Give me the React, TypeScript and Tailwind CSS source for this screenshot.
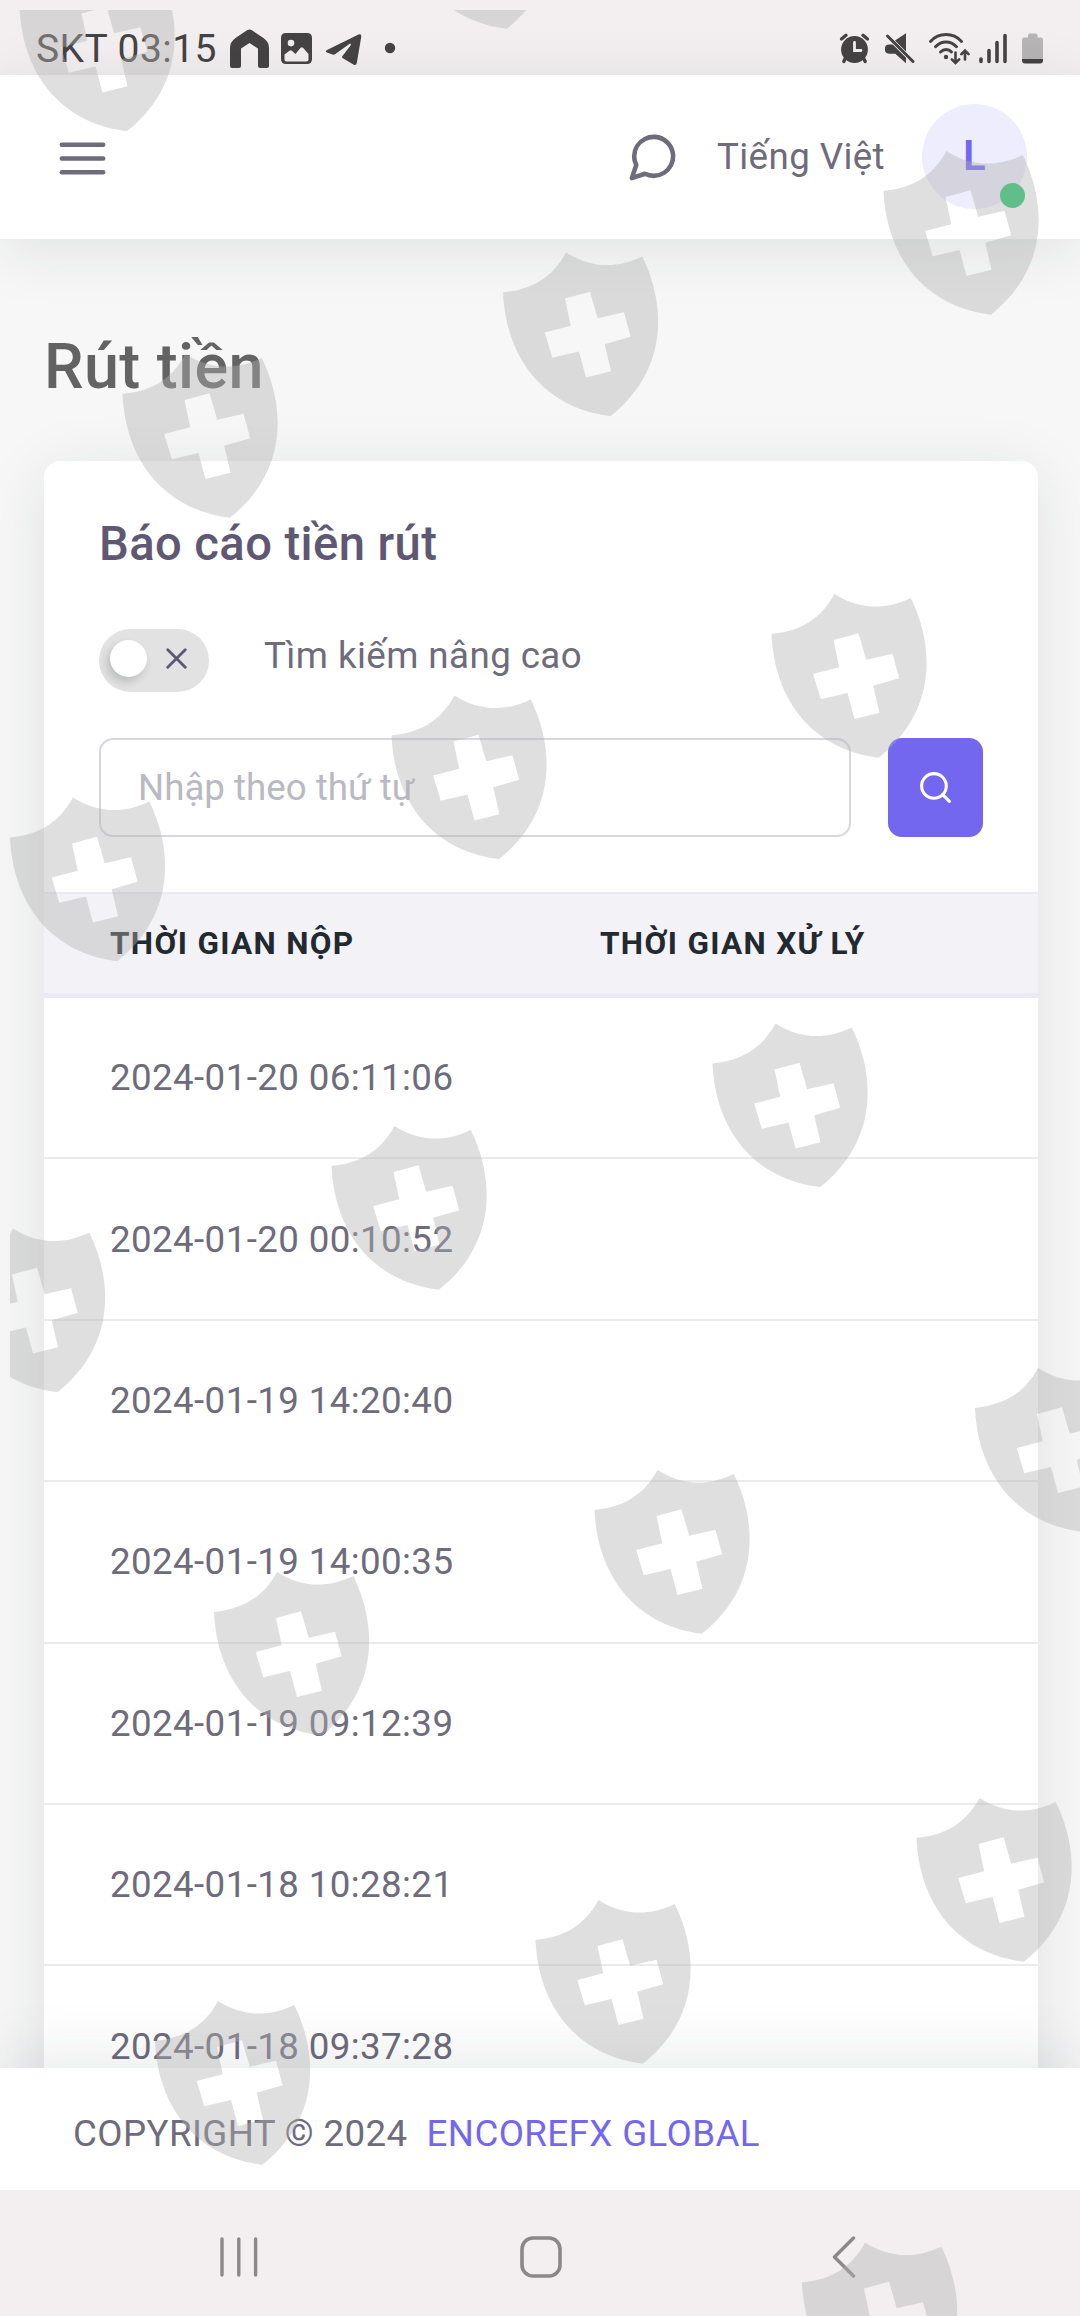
import React from 'react';
import { FiMenu, FiMessageCircle, FiSearch, FiX } from 'react-icons/fi';

const withdrawals = [
  '2024-01-20 06:11:06',
  '2024-01-20 00:10:52',
  '2024-01-19 14:20:40',
  '2024-01-19 14:00:35',
  '2024-01-19 09:12:39',
  '2024-01-18 10:28:21',
  '2024-01-18 09:37:28',
];

// top-left corner of every shield in the overlay
const shields = [
  [19.5, -32.5],
  [399.5, -135],
  [883.5, 151],
  [503, 252.5],
  [122.5, 354],
  [771.5, 594],
  [391.5, 695.5],
  [10, 797.5],
  [712.5, 1023.5],
  [331.5, 1126],
  [-50, 1228.5],
  [975, 1368],
  [594.5, 1470],
  [214, 1572],
  [916.5, 1798],
  [535.5, 1900],
  [155, 2001],
  [802, 2242.5],
];

const ShieldOverlay: React.FC = () => (
  <svg className="absolute inset-0 z-50 pointer-events-none" width="1080" height="2316" viewBox="0 0 1080 2316">
    <defs>
      <clipPath id="overlay-area">
        <rect x="10" y="10" width="1070" height="2306" />
      </clipPath>
      <path
        id="shield"
        fillRule="evenodd"
        d="M0 40C28 37 49 26 63 0C87 15 112 17 139.3 4C166.500 60 160.500 122 107.3 163.7C43 156 3 108 0 40ZM62 46L67.7 73.3L41.7 80L49.3 105.3L76 99L83 125L108 118.7L101.7 91.7L127.7 84.3L121 59.7L94.7 65.7L87 39.3Z"
      />
    </defs>
    <g clipPath="url(#overlay-area)" fill="#b1b1b1" fillOpacity="0.41">
      {shields.map(([x, y]) => (
        <use key={`${x}-${y}`} href="#shield" x={x} y={y} />
      ))}
    </g>
  </svg>
);

const StatusBar: React.FC = () => (
  <div className="h-[75px] shrink-0 bg-[#f3eff0] flex items-start justify-between pl-[36px] pr-[37px] text-[#464344]">
    <div className="flex items-start">
      <span className="w-[194px] mt-[26px] text-[39px] leading-[46px] whitespace-nowrap tracking-[0.450px]">SKT 03:15</span>
      {/* Notifications */}
      <svg className="mt-[20px]" width="170" height="50" viewBox="230 20 170 50" fill="currentColor">
        <path d="M247 30.3Q249.500 28.500 252 30.300L263.500 38Q269 42 269 48V66Q269 68 267 68H260Q258 68 258 66V48.500L249.500 43L241 48.500V66Q241 68 239 68H232Q230 68 230 66V48Q230 42 235.500 38Z" />
        <path fillRule="evenodd" d="M286 33H307Q312 33 312 38V59Q312 64 307 64H286Q281 64 281 59V38Q281 33 286 33ZM284.500 54.500V59.500Q284.500 61.500 286.500 61.500H306.500Q308.500 61.500 308.500 59.500V54L303 47.800Q301.800 46.500 300.600 47.800L295.500 54L291.500 50.600Q290.500 49.800 289.500 50.800ZM291 39.800A3.300 3.300 0 1 0 291 46.400A3.300 3.300 0 1 0 291 39.800Z" />
        <path d="M327 50L358.500 34.600Q361.500 33.500 361.300 36.500L356.800 63Q356 66 353.400 64.500L342.500 58Q341.500 57.200 342.300 56.200L350.500 45.500C351.500 43.800 350.500 43.200 349 44.200L335 54.300Q334 55 332.500 54.500L327 52.500Q324.700 51.300 327 50Z" />
        <circle cx="390" cy="48" r="5.200" />
      </svg>
    </div>
    <svg className="mt-[20px]" width="207" height="50" viewBox="836 20 207 50" fill="currentColor">
      {/* Alarm */}
      <circle cx="854.500" cy="49.500" r="13.400" />
      <g stroke="currentColor" strokeWidth="3.400" strokeLinecap="round" fill="none">
        <path d="M841.500 39L846 35.300M863 35.300L867.500 39M845.500 58L843.800 61.500M863.500 58L865.200 61.500" />
      </g>
      <path d="M854.500 42.500V50.500H861" stroke="#f3eff0" strokeWidth="2.800" fill="none" strokeLinecap="round" />
      {/* Muted speaker */}
      <path d="M895 40.500L906 33.200V51.500ZM906 58V63.300L895.500 53.800H890Q885 53.800 885 50V48Q885 44.500 889 44.500H892.500Z" />
      <path d="M892.500 44.500L906 58L904 61L895.500 53.800Z" />
      <path d="M887.500 36L913 61.500" stroke="currentColor" strokeWidth="3" strokeLinecap="round" />
      {/* Wifi */}
      <g stroke="currentColor" strokeWidth="3" strokeLinecap="round" fill="none">
        <path d="M930.500 41.500C939 32.300 953 32.300 961.500 41.500M935.500 46.700C941.500 40.300 950.500 40.300 956.500 46.700M940.500 52C944 48.600 948.500 48.600 951.500 52" />
        <path strokeWidth="2.600" d="M955.500 52.500V62.500M951.800 59.300L955.500 63L959.200 59.300M965 59.500V51M961.300 54.200L965 50.600L968.600 54.200" />
      </g>
      <circle cx="946" cy="57" r="2.200" />
      {/* Signal */}
      <path d="M981 59V61.500M989 50.500V61.500M997 42.500V61.500M1005 35.500V61.500" stroke="currentColor" strokeWidth="3.600" strokeLinecap="round" />
      {/* Battery */}
      <path fill="#b7b4b5" d="M1028 37.500V35.500Q1028 33.500 1030 33.500H1035.500Q1037.500 33.500 1037.500 35.500V37.500H1040.500Q1043 37.500 1043 40V59H1022V40Q1022 37.500 1024.500 37.500Z" />
      <path d="M1022 59H1043V60.500Q1043 63.500 1040 63.500H1025Q1022 63.500 1022 60.500Z" />
    </svg>
  </div>
);

const Navbar: React.FC = () => (
  <header className="relative z-10 h-[164px] shrink-0 bg-white flex items-center justify-between pl-[55px] pr-[53px] shadow-[0_10px_63px_rgba(34,41,47,0.1)]">
    <FiMenu className="w-[55px] h-[55px] mt-[3px]" />
    <div className="flex items-center pb-[2px]">
      <FiMessageCircle className="w-[55px] h-[55px] mt-[2px]" />
      <span className="ml-[37px] w-[167px] whitespace-nowrap">Tiếng Việt</span>
      <div className="relative ml-[38px] w-[105px] h-[105px] pb-[2px] rounded-full bg-[#eeedfd] text-[#7367f0] flex items-center justify-center text-[42px] font-semibold">
        L
        <span className="absolute right-[2px] bottom-[1px] w-[25px] h-[25px] rounded-full bg-[#28c76f]" />
      </div>
    </div>
  </header>
);

const SearchPanel: React.FC = () => (
  <div className="h-[431px] px-[55px] pt-[55px]">
    <h4 className="text-[47.200px] leading-[56px] font-medium text-[#5e5873]">Báo cáo tiền rút</h4>
    <div className="mt-[57px] flex items-start">
      <div className="w-[110px] h-[63px] rounded-full bg-[#e2e2e2] flex items-center justify-between pl-[11px] pr-[15px]">
        <div className="w-[37px] h-[37px] -mt-[4px] rounded-full bg-white shadow-[-3px_5px_8px_rgba(34,41,47,0.2)]" />
        <FiX className="w-[35px] h-[35px] -mt-[4px] text-[#5e5873]" />
      </div>
      <span className="ml-[55px] mt-[5px] leading-[44px] tracking-[0.430px]">Tìm kiếm nâng cao</span>
    </div>
    <div className="mt-[46px] flex justify-between">
      <div className="w-[752px] h-[99px] border-[2px] border-[#d8d6de] rounded-[14px] px-[37px] flex items-center text-[#b9b9c3] tracking-normal">
        Nhập theo thứ tự
      </div>
      <button className="w-[95px] h-[99px] rounded-[14px] bg-[#7367f0] text-white flex items-center justify-center">
        <FiSearch className="w-[37px] h-[37px]" />
      </button>
    </div>
  </div>
);

const App: React.FC = () => {
  return (
    <div className="relative w-[1080px] h-[2316px] overflow-hidden flex flex-col bg-[#f7f7f7] text-[#6e6b7b] font-[Roboto,sans-serif] text-[36.700px] leading-[53px] tracking-[0.400px]">
      <StatusBar />
      <Navbar />

      <main className="flex-1 min-h-0 overflow-hidden px-[44px] pt-[90px]">
        <h2 className="text-[62.900px] leading-[75px] font-medium text-[#636363]">Rút tiền</h2>
        <section className="mt-[57px] mr-[-2px] h-[1800px] rounded-[16px] bg-white shadow-[0_10px_63px_rgba(34,41,47,0.1)]">
          <SearchPanel />
          <div className="h-[106px] flex items-center bg-[#f3f2f7] border-t-[2px] border-t-[#ebe9f1] border-b-[5px] border-b-[#ebe9f6] pl-[66px] text-[31.500px] font-bold tracking-[1.310px] text-[#22292f]">
            <span className="w-[490px]">THỜI GIAN NỘP</span>
            <span>THỜI GIAN XỬ LÝ</span>
          </div>
          {withdrawals.map((time) => (
            <div key={time} className="h-[161.400px] flex items-center border-b-[2px] border-[#ebebeb] pl-[66px]">
              {time}
            </div>
          ))}
        </section>
      </main>

      <footer className="relative z-10 h-[122px] shrink-0 bg-white flex items-center pl-[73px] pt-[8px] shadow-[0_-10px_63px_rgba(34,41,47,0.1)]">
        <span>COPYRIGHT © 2024</span>
        <span className="ml-[19px] text-[#7367f0]">ENCOREFX GLOBAL</span>
      </footer>

      {/* System navigation */}
      <div className="relative z-20 h-[126px] shrink-0 bg-[#f3eff0] flex items-start pt-[46px] pl-[219px] text-[#8c8889]">
        <svg width="40" height="42" viewBox="0 0 40 42" stroke="currentColor" strokeWidth="3.400" strokeLinecap="round">
          <path d="M3 3V39M19.800 3V39M36.600 3V39" />
        </svg>
        <svg className="ml-[261px]" width="42" height="42" viewBox="0 0 42 42" fill="none" stroke="currentColor" strokeWidth="3.600">
          <rect x="2" y="2" width="38" height="38" rx="11" />
        </svg>
        <svg className="ml-[270px]" width="24" height="42" viewBox="0 0 24 42" fill="none" stroke="currentColor" strokeWidth="3.400" strokeLinecap="round" strokeLinejoin="round">
          <path d="M21.500 2L2.500 21L21.500 40" />
        </svg>
      </div>

      <ShieldOverlay />
    </div>
  );
};

export default App;
